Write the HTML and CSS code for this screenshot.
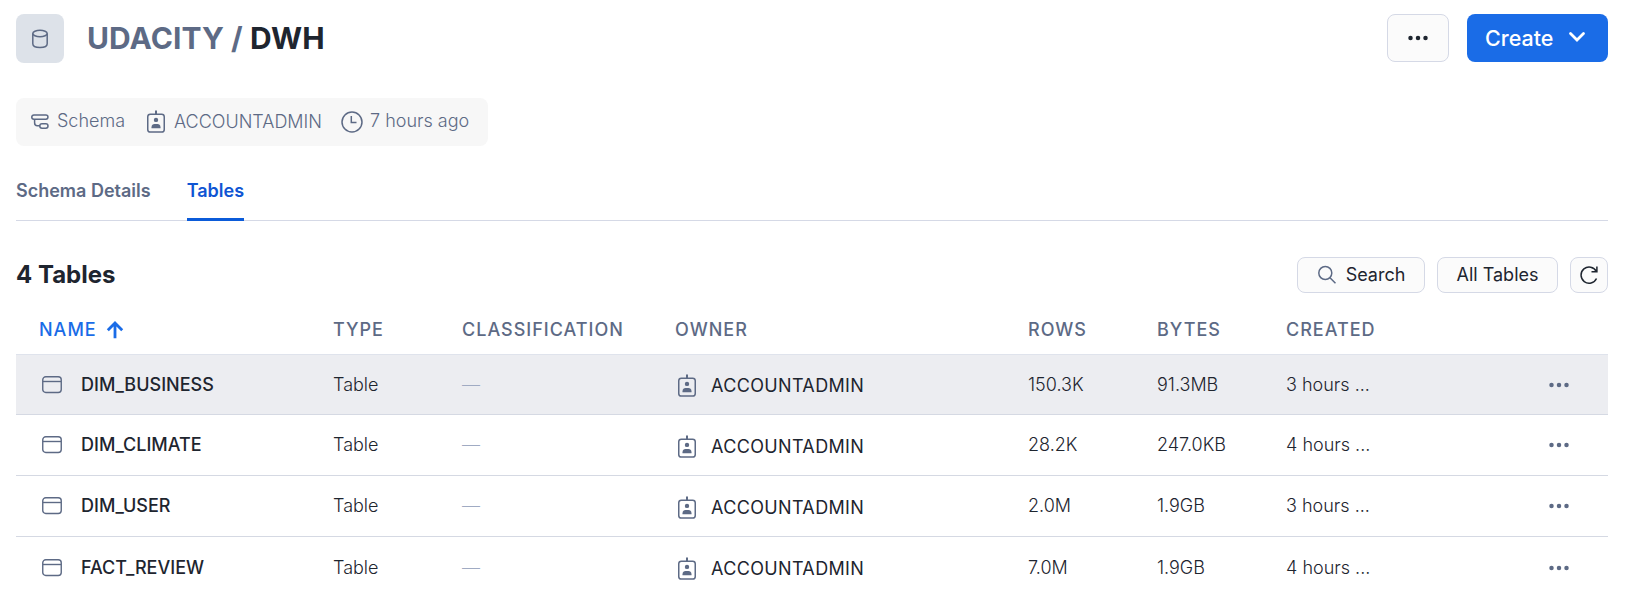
FILE: index.html
```html
<!DOCTYPE html>
<html lang="en">
<head>
<meta charset="utf-8">
<title>UDACITY / DWH</title>
<link rel="stylesheet" href="styles.css">
</head>
<body>
<svg class="sprite" aria-hidden="true">
  <symbol id="badge" viewBox="0 0 20 24"><path d="M10 .5v3.500" stroke-width="2"/><rect x="1.750" y="4.250" width="16.500" height="17.800" rx="2.600" stroke-width="1.500"/><circle cx="10" cy="9.900" r="2.200" fill="currentColor" stroke="none"/><path d="M5.500 18.200v-1c0-2.200 1.500-3.300 3-3.300h3c1.500 0 3 1.100 3 3.300v1z" fill="currentColor" stroke="none"/></symbol>
  <symbol id="table" viewBox="0 0 20 18"><rect x=".75" y=".75" width="18.500" height="15.700" rx="3" stroke-width="1.400"/><path d="M1 5.500h18" stroke-width="1.400"/></symbol>
  <symbol id="dots" viewBox="0 0 20 6"><g fill="currentColor" stroke="none"><circle cx="2.500" cy="3" r="2.250"/><circle cx="10" cy="3" r="2.250"/><circle cx="17.500" cy="3" r="2.250"/></g></symbol>
</svg>
<main class="page">
  <header class="top">
    <div class="tile"><svg width="18" height="20" viewBox="0 0 18 20"><ellipse cx="9" cy="4.500" rx="7.200" ry="3.200"/><path d="M1.800 4.500v10.200c0 5 14.400 5 14.400 0V4.500"/></svg></div>
    <h1 class="title"><span class="parent">UDACITY /</span> DWH</h1>
    <button class="btn more"><svg width="20" height="6"><use href="#dots"/></svg></button>
    <button class="btn create">Create<svg width="18" height="12" viewBox="0 0 18 12"><path d="M2.500 2.500 9 9l6.500-6.500" stroke-width="2.800" stroke-linecap="round"/></svg></button>
  </header>

  <div class="meta">
    <svg class="schema-icon" width="20" height="18" viewBox="0 0 20 18"><rect x="1.750" y="2" width="16.200" height="4.200" rx="2.100"/><path d="M4.600 6.200v3.600c0 1.900 1 3 2.700 3h2.500"/><rect x="9.800" y="10.800" width="8.200" height="4.500" rx="2.200"/></svg>
    <span class="schema">Schema</span>
    <svg class="badge-icon" width="20" height="24"><use href="#badge"/></svg>
    <span class="role">ACCOUNTADMIN</span>
    <svg class="clock-icon" width="22" height="22" viewBox="0 0 22 22"><circle cx="11" cy="11" r="10"/><path d="M10.300 5v6.500H15.500"/></svg>
    <span class="age">7 hours ago</span>
  </div>

  <nav class="tabs"><a class="tab">Schema Details</a><a class="tab active">Tables</a></nav>

  <section class="bar">
    <h2 class="count">4 Tables</h2>
    <button class="btn search"><svg width="20" height="20" viewBox="0 0 20 20"><circle cx="8.300" cy="8" r="6.500"/><path d="m13 12.700 5.500 5.500"/></svg>Search</button>
    <button class="btn filter">All Tables</button>
    <button class="btn refresh"><svg width="20" height="20" viewBox="0 0 20 20"><path d="M17.300 6.300A8.100 8.100 0 1 0 17.500 13.500M17.900 1.500v5.200h-5.400"/></svg></button>
  </section>

  <section class="grid">
    <div class="row head">
      <div class="sorted">NAME<svg width="18" height="18" viewBox="0 0 18 18"><path d="M9 17.200V2.500M1.800 9.300 9 2.100l7.200 7.200"/></svg></div>
      <div>TYPE</div><div>CLASSIFICATION</div><div>OWNER</div><div>ROWS</div><div>BYTES</div><div>CREATED</div><div></div>
    </div>
    <div class="row hover">
      <div class="name"><svg width="20" height="18"><use href="#table"/></svg>DIM_BUSINESS</div>
      <div>Table</div><div class="none">—</div>
      <div class="owner"><svg width="20" height="24"><use href="#badge"/></svg>ACCOUNTADMIN</div>
      <div>150.3K</div><div>91.3MB</div><div>3 hours ...</div>
      <div class="act"><svg width="20" height="6"><use href="#dots"/></svg></div>
    </div>
    <div class="row">
      <div class="name"><svg width="20" height="18"><use href="#table"/></svg>DIM_CLIMATE</div>
      <div>Table</div><div class="none">—</div>
      <div class="owner"><svg width="20" height="24"><use href="#badge"/></svg>ACCOUNTADMIN</div>
      <div>28.2K</div><div>247.0KB</div><div>4 hours ...</div>
      <div class="act"><svg width="20" height="6"><use href="#dots"/></svg></div>
    </div>
    <div class="row">
      <div class="name"><svg width="20" height="18"><use href="#table"/></svg>DIM_USER</div>
      <div>Table</div><div class="none">—</div>
      <div class="owner"><svg width="20" height="24"><use href="#badge"/></svg>ACCOUNTADMIN</div>
      <div>2.0M</div><div>1.9GB</div><div>3 hours ...</div>
      <div class="act"><svg width="20" height="6"><use href="#dots"/></svg></div>
    </div>
    <div class="row">
      <div class="name"><svg width="20" height="18"><use href="#table"/></svg>FACT_REVIEW</div>
      <div>Table</div><div class="none">—</div>
      <div class="owner"><svg width="20" height="24"><use href="#badge"/></svg>ACCOUNTADMIN</div>
      <div>7.0M</div><div>1.9GB</div><div>4 hours ...</div>
      <div class="act"><svg width="20" height="6"><use href="#dots"/></svg></div>
    </div>
  </section>
</main>
</body>
</html>
```
FILE: styles.css
```css
* { box-sizing: border-box; }
body { margin: 0; background: #fff; color: #1e252f; font: 400 18px/24px Inter, "Liberation Sans", sans-serif; overflow: hidden; white-space: nowrap; }
h1, h2 { margin: 0; }
svg { display: block; flex: none; fill: none; stroke: currentColor; stroke-width: 1.5; }
.sprite { display: none; }
.page { height: 605px; padding: 14px 37px 0 16px; overflow: hidden; }

.top { display: flex; align-items: flex-start; height: 84px; }
.tile { display: flex; align-items: center; justify-content: center; width: 48px; height: 49px; border-radius: 8px; background: #dde2e9; color: #5d6a85; }
.title { flex: 1; margin-left: 23px; font-size: 30px; line-height: 49px; font-weight: 700; letter-spacing: .08px; }
.parent { color: #5d6a85; }

.btn { display: flex; align-items: center; justify-content: center; margin: 0; padding: 0; border: 1px solid #d5d9e6; border-radius: 8px; background: #fbfbfb; color: #1e252f; font: inherit; }
.more { width: 62px; height: 48px; }
.create { justify-content: flex-start; width: 141px; height: 48px; margin-left: 18px; padding-left: 18px; gap: 15px; border: 0; background: #1a6ce7; color: #fff; font-size: 21.5px; font-weight: 500; }
.create svg { margin-top: -2px; }

.meta { display: flex; align-items: center; width: 472px; height: 48px; padding-left: 14px; border-radius: 8px; background: #f7f7f7; color: #5d6a85; font-weight: 350; }
.schema { width: 67px; margin-left: 7px; padding-bottom: 2px; }
.badge-icon { margin-left: 22px; }
.role { width: 147px; margin-left: 8px; }
.clock-icon { margin-left: 20px; }
.age { margin-left: 7px; padding-bottom: 2px; }

.tabs { display: flex; gap: 36px; height: 75px; padding-top: 33px; border-bottom: 1px solid #d5d9e6; color: #5d6a85; font-weight: 600; }
.tab { height: 42px; }
.active { border-bottom: 3px solid #0b5bd9; color: #0f55d3; }

.bar { display: flex; align-items: center; height: 36px; margin-top: 36px; }
.count { flex: 1; font-size: 24px; font-weight: 700; }
.search { width: 128px; height: 36px; gap: 9px; }
.search svg { color: #5d6a85; }
.filter { width: 121px; height: 36px; margin-left: 12px; }
.refresh { width: 38px; height: 36px; margin-left: 12px; }

.row { display: grid; grid-template-columns: 294px 129px 213px 353px 129px 129px 263px 1fr; align-items: center; height: 61px; padding-left: 23px; border-bottom: 1px solid #d5d9e3; font-weight: 350; }
.row:last-child { border-bottom: 0; }
.head { height: 62px; padding-top: 13px; border-bottom-color: #dfe3ec; color: #5d6a85; font-weight: 500; letter-spacing: 1px; }
.sorted { display: flex; align-items: center; gap: 9px; color: #1a6ce7; }
.sorted svg { stroke-width: 2.8; }
.hover { height: 60px; background: #ecedf1; }
.name { display: flex; align-items: center; gap: 19px; padding-left: 3px; font-weight: 500; }
.name svg, .owner svg, .act { color: #5d6a85; }
.none { color: #a0abc3; }
.owner { display: flex; align-items: center; gap: 14px; padding: 3px 0 0 2px; font-weight: 400; letter-spacing: .35px; }
```
